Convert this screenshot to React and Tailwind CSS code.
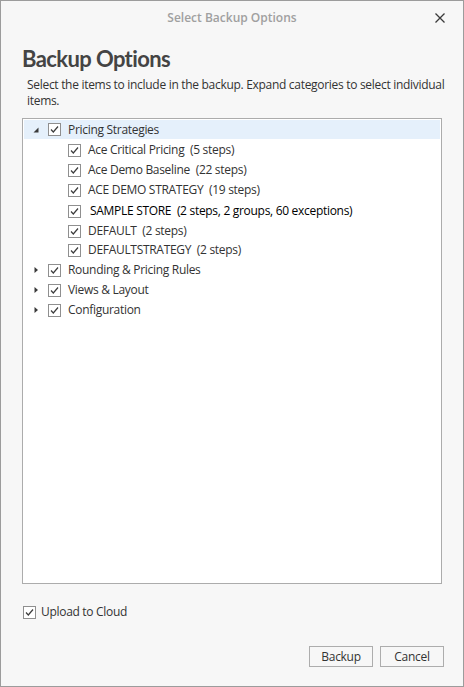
import React from 'react';

const font = { fontFamily: '"Open Sans", "Noto Sans", sans-serif' };

const Check = () => (
  <span className="w-[13px] h-[13px] border border-[#8f8f8f] bg-white flex items-center justify-center shrink-0">
    <svg width="11" height="11" viewBox="0 0 11 11">
      <path d="M2 5.5 L4.3 8 L9 2.5" fill="none" stroke="#3c3c3c" strokeWidth="1.2" />
    </svg>
  </span>
);

const Expanded = () => (
  <svg width="8" height="8" viewBox="0 0 8 8" className="shrink-0">
    <path d="M6.5 1.5 L6.5 6.5 L1.5 6.5 Z" fill="#3a3a3a" />
  </svg>
);

const Collapsed = () => (
  <svg width="8" height="8" viewBox="0 0 8 8" className="shrink-0">
    <path d="M2.5 1 L6 4 L2.5 7 Z" fill="#3a3a3a" />
  </svg>
);

const children = [
  { label: 'Ace Critical Pricing', extra: '(5 steps)', h: 'h-[20px]' },
  { label: 'Ace Demo Baseline', extra: '(22 steps)', h: 'h-[20px]' },
  { label: 'ACE DEMO STRATEGY', extra: '(19 steps)', h: 'h-[20px]' },
  { label: 'SAMPLE STORE', extra: '(2 steps, 2 groups, 60 exceptions)', h: 'h-[22px]', strong: true },
  { label: 'DEFAULT', extra: '(2 steps)', h: 'h-[18px]' },
  { label: 'DEFAULTSTRATEGY', extra: '(2 steps)', h: 'h-[20px]' },
];

const collapsed = ['Rounding & Pricing Rules', 'Views & Layout', 'Configuration'];

export default function App() {
  return (
    <div className="w-[464px] h-[687px] bg-[#f7f7f7] border border-[#9c9c9c] flex flex-col text-[12px] text-[#333] tracking-[-0.3px]" style={font}>
      {/* title bar */}
      <div className="relative h-[34px] flex items-center justify-center">
        <span className="text-[#a0a0a0] font-semibold text-[12px] tracking-normal">Select Backup Options</span>
        <svg width="10" height="10" viewBox="0 0 10 10" className="absolute right-[18px] top-[12px]">
          <path d="M0.5 0.5 L9.5 9.5 M9.5 0.5 L0.5 9.5" stroke="#3a3a3a" strokeWidth="1.3" />
        </svg>
      </div>

      <div className="flex-1 flex flex-col px-[21px]">
        <h1
          className="text-[22px] font-bold text-[#444] leading-none mt-[13px] tracking-[-0.6px]"
          style={{ fontFamily: 'Lato, "Open Sans", sans-serif' }}
        >
          Backup Options
        </h1>
        <p className="mt-[7px] ml-[5px] mr-[-6px] leading-[16px] text-[#333]">
          Select the items to include in the backup. Expand categories to select individual items.
        </p>

        <div className="mt-[9px] h-[466px] bg-white border border-[#acacac] pt-[1px] px-[1px]">
          <div className="h-[19px] bg-[#e5f0fb] flex items-center pl-[8px] gap-[8px] mb-[1px]">
            <Expanded />
            <Check />
            <span className="ml-[-1px]">Pricing Strategies</span>
          </div>
          {children.map((c) => (
            <div key={c.label} className={`${c.h} flex items-center pl-[44px] gap-[7px]`}>
              <Check />
              <span className={c.strong ? 'text-black ml-[2px]' : ''}>
                {c.label}&nbsp;&nbsp;{c.extra}
              </span>
            </div>
          ))}
          {collapsed.map((l) => (
            <div key={l} className="h-[20px] flex items-center pl-[8px] gap-[8px]">
              <Collapsed />
              <Check />
              <span className="ml-[-1px]">{l}</span>
            </div>
          ))}
        </div>

        <label className="mt-[19px] flex items-center gap-[5px] ml-[1px]">
          <Check />
          <span>Upload to Cloud</span>
        </label>

        <div className="mt-auto mb-[19px] flex justify-end gap-[7px]">
          <button className="w-[64px] h-[21px] border border-[#adadad] bg-[#f7f7f7] text-[#333] text-[12px] leading-none">Backup</button>
          <button className="w-[64px] h-[21px] border border-[#adadad] bg-[#f7f7f7] text-[#333] text-[12px] leading-none mr-[-2px]">Cancel</button>
        </div>
      </div>
    </div>
  );
}
